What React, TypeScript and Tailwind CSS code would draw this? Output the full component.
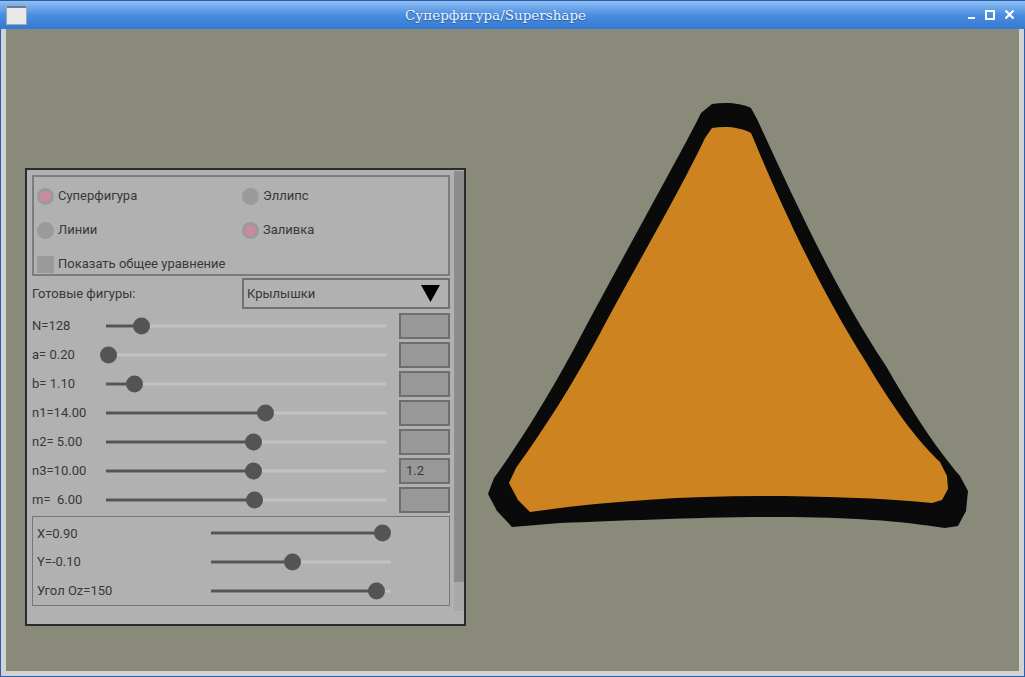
import React from "react";

const ui = { fontFamily: "Roboto, 'Liberation Sans', sans-serif" };

interface SliderProps {
  width: number;
  pos: number;
}

// pos = handle centre measured from the left end of the track
const Slider = ({ width, pos }: SliderProps) => (
  <div className="relative h-full shrink-0" style={{ width }}>
    <div className="absolute left-0 right-0 top-1/2 h-[3px] -translate-y-1/2 bg-[#c2c2c2]" />
    <div
      className="absolute left-0 top-1/2 h-[3px] -translate-y-1/2 bg-[#545454]"
      style={{ width: pos }}
    />
    <div
      className="absolute top-1/2 h-[17px] w-[17px] -translate-y-1/2 rounded-full bg-[#545454]"
      style={{ left: pos - 8.5 }}
    />
  </div>
);

const Radio = ({ checked }: { checked?: boolean }) => (
  <div className="flex h-[17px] w-[17px] shrink-0 items-center justify-center rounded-full bg-[#9a9a9a]">
    {checked && <div className="h-[11px] w-[11px] rounded-full bg-[#c98a9c]" />}
  </div>
);

const params = [
  { label: "N=128", pos: 35, text: "" },
  { label: "a= 0.20", pos: 2, text: "" },
  { label: "b= 1.10", pos: 28, text: "" },
  { label: "n1=14.00", pos: 159, text: "" },
  { label: "n2= 5.00", pos: 147, text: "" },
  { label: "n3=10.00", pos: 147, text: "1.2" },
  { label: "m=  6.00", pos: 148, text: "" },
];

const moves = [
  { label: "X=0.90", pos: 171 },
  { label: "Y=-0.10", pos: 81 },
  { label: "Угол Oz=150", pos: 165 },
];

function TitleBar() {
  return (
    <div className="relative flex h-[29px] shrink-0 items-center justify-center border-t border-[#2a5ea8] bg-gradient-to-b from-[#8fbff3] via-[#4a8de0] to-[#3479d2] pr-[34px]">
      <div className="absolute left-[6px] top-[4px] flex h-[20px] w-[21px] flex-col border border-[#9aa8b8] bg-[#e9e9e9]">
        <div className="h-[2px] bg-[#5f7fa3]" />
      </div>
      <span
        className="text-[13.5px] text-[#eef3fb] [text-shadow:0_1px_1px_#2a5a9a]"
        style={{ fontFamily: "'DejaVu Serif', serif" }}
      >
        Суперфигура/Supershape
      </span>
      <div className="absolute right-[10px] top-[8px] flex items-center gap-[9px]">
        <svg width="9" height="11" viewBox="0 0 9 11">
          <rect x="1" y="8" width="7" height="2" fill="#fff" />
        </svg>
        <svg width="10" height="10" viewBox="0 0 10 10">
          <rect x="1" y="1" width="8" height="8" fill="none" stroke="#fff" strokeWidth="2" />
        </svg>
        <svg width="11" height="11" viewBox="0 0 11 11">
          <path d="M1.5 1.5 L9.5 9.5 M9.5 1.5 L1.5 9.5" stroke="#fff" strokeWidth="2.2" />
        </svg>
      </div>
    </div>
  );
}

function Shape() {
  return (
    <svg className="absolute inset-0" width="1012" height="642" viewBox="6 29 1012 642">
      <path
        d="M712 104 C726 102 741 103 751 108 L757 119
           C792 195 834 288 886 366 C918 422 942 455 960 476
           L968 491 L966 511 L958 526 L945 528
           C900 521 850 517 780 517 C700 517 620 521 560 523
           L512 527 L497 511 L488 494 L494 478
           C518 445 550 395 584 330 C624 255 666 180 695 125 L701 113 Z"
        fill="#0a0a0a"
      />
      <path
        d="M712 128 C725 126 740 127 751 133
           C777 195 814 280 866 362 C899 418 922 445 940 462
           L947 476 L948 489 L942 500 L932 503
           C880 498 820 496 760 496 C680 496 600 502 530 512
           L518 500 L509 483 L516 468
           C542 432 573 385 606 322 C645 250 683 185 705 138 Z"
        fill="#cd8420"
      />
    </svg>
  );
}

function Panel() {
  return (
    <div
      className="relative flex h-[458px] w-[441px] border-2 border-[#2b2b2b] bg-[#b1b1b1] text-[13px] text-[#383838]"
      style={ui}
    >
      <div className="flex w-[423px] flex-col pl-[5px] pt-[5px]">
        <div className="flex h-[101px] flex-col border-2 border-[#7c7c7c] pl-[3px] pt-[9px]">
          <div className="flex h-[20px] items-center">
            <div className="flex w-[205px] items-center gap-[4px]">
              <Radio checked />
              <span>Суперфигура</span>
            </div>
            <div className="flex items-center gap-[4px]">
              <Radio />
              <span>Эллипс</span>
            </div>
          </div>
          <div className="mt-[14px] flex h-[20px] items-center">
            <div className="flex w-[205px] items-center gap-[4px]">
              <Radio />
              <span>Линии</span>
            </div>
            <div className="flex items-center gap-[4px]">
              <Radio checked />
              <span>Заливка</span>
            </div>
          </div>
          <div className="mt-[14px] flex h-[20px] items-center gap-[4px]">
            <div className="h-[17px] w-[17px] bg-[#9a9a9a]" />
            <span>Показать общее уравнение</span>
          </div>
        </div>

        <div className="mt-[2px] flex h-[31px] items-center">
          <span className="w-[210px]">Готовые фигуры:</span>
          <div className="flex h-[31px] w-[208px] items-center justify-between border-2 border-[#707070] pl-[3px] pr-[8px]">
            <span>Крылышки</span>
            <svg width="19" height="17" viewBox="0 0 19 17">
              <polygon points="0,0 19,0 9.5,17" fill="#000" />
            </svg>
          </div>
        </div>

        <div className="mt-[2px] flex flex-col">
          {params.map((p) => (
            <div key={p.label} className="flex h-[29px] items-center">
              <span className="w-[74px] whitespace-pre">{p.label}</span>
              <Slider width={280} pos={p.pos} />
              <div className="ml-[13px] flex h-[26px] w-[51px] items-center border-2 border-[#6e6e6e] bg-[#989898] pl-[5px]">
                {p.text}
              </div>
            </div>
          ))}
        </div>

        <div className="mt-[2px] flex h-[90px] w-[418px] flex-col border border-[#767676] pl-[4px] pt-[2px]">
          {moves.map((m) => (
            <div key={m.label} className="flex h-[29px] items-center">
              <span className="w-[174px]">{m.label}</span>
              <Slider width={180} pos={m.pos} />
            </div>
          ))}
        </div>
      </div>

      <div className="ml-[4px] mt-[1px] flex h-[440px] w-[10px] flex-col">
        <div className="h-[411px] bg-[#8d8d8d]" />
        <div className="flex-1 bg-[#a9a9a9]" />
      </div>
    </div>
  );
}

export default function App() {
  return (
    <div className="flex h-[677px] w-[1025px] flex-col overflow-hidden bg-[#2a5ea8]">
      <TitleBar />
      <div className="mx-px mb-px flex flex-1 flex-col border-x-[5px] border-b-[5px] border-[#d2d2d2]">
        <div className="relative flex-1 bg-[#8a8a7a] pl-[19px] pt-[139px]">
          <Shape />
          <Panel />
        </div>
      </div>
    </div>
  );
}
